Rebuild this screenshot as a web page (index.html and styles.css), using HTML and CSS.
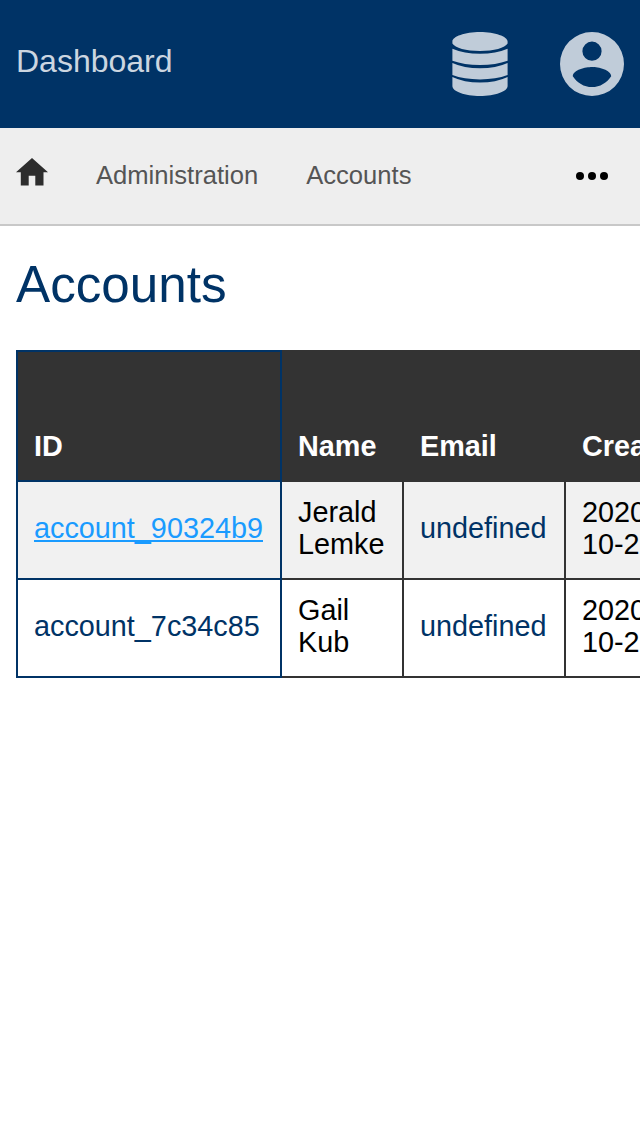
FILE: index.html
```html
<!DOCTYPE html>
<html lang="en">
<head>
<meta charset="utf-8">
<title>Dashboard</title>
<link rel="stylesheet" href="styles.css">
</head>
<body>
<header class="topbar">
  <a class="brand">Dashboard</a>
  <div class="actions">
    <svg class="database" viewBox="0 0 56 64"><path d="M28 0C43 0 55.600 4.500 55.600 9.500V11.500C53 16 42 19 28 19S3 16 .4 11.500V9.500C.4 4.500 13 0 28 0ZM.4 16.800Q12 21.800 28 21.800T55.600 16.800V28.800Q44 33 28 33T.4 28.800ZM.4 30.900Q12 36.200 28 36.200T55.600 30.900V43Q44 47.400 28 47.400T.4 43ZM.4 45Q12 50.600 28 50.600T55.600 45V54C55.600 59.500 43 64 28 64S.4 59.500 .4 54Z"/></svg>
    <svg class="user" viewBox="0 0 64 64"><path fill-rule="evenodd" d="M32 0A32 32 0 1 1 32 64A32 32 0 1 1 32 0ZM32 9.600A9.600 9.600 0 1 0 32 28.800A9.600 9.600 0 1 0 32 9.600ZM12.800 44.160C16.960 50.600 24 55.040 32 55.040S47.040 50.600 51.200 44.160C51.100 37.800 38.380 34.900 32 34.900S12.900 37.800 12.800 44.160Z"/></svg>
  </div>
</header>
<nav class="crumbs">
  <svg class="home" viewBox="0 0 32 28"><path d="M16 0L32 14.200H27.500V27.400H19.300V17.700H12.700V27.400H4.800V14.200H0Z"/></svg>
  <a>Administration</a>
  <a>Accounts</a>
  <svg class="more" viewBox="0 0 32 8"><circle cx="4" cy="4" r="4"/><circle cx="16" cy="4" r="4"/><circle cx="28" cy="4" r="4"/></svg>
</nav>
<main>
  <h1>Accounts</h1>
  <table>
    <colgroup><col class="c-id"><col class="c-name"><col class="c-email"><col class="c-created"></colgroup>
    <thead><tr><th class="id">ID</th><th>Name</th><th>Email</th><th>Created</th></tr></thead>
    <tbody>
      <tr><td class="id"><a class="active">account_90324b9</a></td><td>Jerald Lemke</td><td><a>undefined</a></td><td>2020-<br>10-21</td></tr>
      <tr><td class="id"><a>account_7c34c85</a></td><td>Gail<br>Kub</td><td><a>undefined</a></td><td>2020-<br>10-21</td></tr>
    </tbody>
  </table>
</main>
</body>
</html>
```
FILE: styles.css
```css
* { box-sizing: border-box; }
html, body { overflow: hidden; }
body { margin: 0; height: 1136px; background: #fff; font-family: "Liberation Sans", Arial, sans-serif; color: #000; }
svg { display: block; flex: none; }
.topbar { display: flex; justify-content: space-between; align-items: center; height: 128px; padding: 0 16px; background: #003366; }
.brand { color: #ccd6e0; font-size: 32px; line-height: 36px; padding-bottom: 7px; }
.actions { display: flex; gap: 52px; fill: #c0ccd9; }
.database { width: 56px; height: 64px; }
.user { width: 64px; height: 64px; }
.crumbs { display: flex; align-items: center; gap: 48px; height: 98px; padding: 0 32px 0 16px; background: #eee; border-bottom: 2px solid #c8c8c8; font-size: 25.6px; line-height: 30px; color: #555; }
.crumbs a { padding-bottom: 2px; }
.home { width: 32px; height: 28px; margin-bottom: 8px; fill: #2d2d2d; }
.more { width: 32px; height: 8px; margin-left: auto; }
main { padding: 30px 16px 0; }
h1 { margin: 0 0 36px; font-size: 51.2px; line-height: 58px; font-weight: 400; color: #003366; }
table { table-layout: fixed; width: 680px; border-collapse: collapse; font-size: 28.8px; line-height: 32px; }
.c-id { width: 264px; }
.c-name { width: 122px; }
.c-email { width: 162px; }
th, td { padding: 14px 16px 18px; border: 2px solid #333; text-align: left; overflow: hidden; }
thead tr { height: 130px; }
th { background: #333; color: #fff; vertical-align: bottom; }
td { height: 98px; vertical-align: middle; }
tbody tr:nth-child(odd) { background: #f1f1f1; }
th.id, td.id { border-color: #003366; }
td a { color: #003366; }
td .active { color: #1a9bff; text-decoration: underline; }
```
